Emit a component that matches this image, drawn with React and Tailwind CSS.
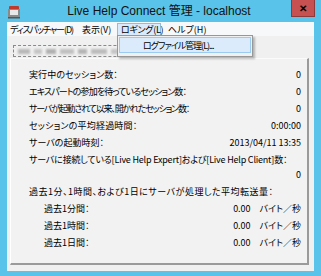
import React from 'react';

const jp = "font-['Noto_Sans_CJK_JP','Noto_Sans',sans-serif] [font-feature-settings:'palt']";

const stats = [
  { label: '実行中のセッション数：', value: '0', track: 'tracking-[0.1px]' },
  { label: 'エキスパートの参加を待っているセッション数：', value: '0', track: 'tracking-[-0.9px]' },
  { label: 'サーバが起動されて以来、開かれたセッション数：', value: '0', track: 'tracking-[-1.2px]' },
  { label: 'セッションの平均経過時間：', value: '0:00:00', track: 'tracking-[0.2px]' },
  { label: 'サーバの起動時刻：', value: '2013/04/11 13:35', track: 'tracking-normal' },
];

const rates = ['過去1分間：', '過去1時間：', '過去1日間：'];

const AppIcon = () => (
  <svg width="14" height="14" viewBox="0 0 14 14">
    <rect x="2" y="1" width="10" height="4" rx="1" fill="#c0392b" />
    <rect x="1" y="4" width="12" height="8" fill="#8a8a8a" />
    <rect x="3" y="5" width="8" height="5" fill="#e8e8e8" />
    <rect x="1" y="12" width="12" height="1.5" fill="#555" />
  </svg>
);

export default function App() {
  return (
    <div className={`w-[321px] h-[276px] bg-[#5ac3e9] flex flex-col relative overflow-hidden ${jp}`}>
      {/* Title bar */}
      <div className="h-[22px] flex items-center relative shrink-0">
        <div className="ml-[7px] mt-[1px]"><AppIcon /></div>
        <div className="flex-1 text-center text-[12px] leading-none text-[#111] font-['Liberation_Sans','Noto_Sans_CJK_JP',sans-serif] pb-[1px] ml-[6px]">
          Live Help Connect 管理 - localhost
        </div>
        <div className="w-[24px] h-[17px] mr-[6px] self-start bg-[#c75050] border border-[#8f3a3a] border-t-0 flex items-center justify-center text-[10px] font-bold text-black leading-none">
          ✕
        </div>
      </div>

      {/* Client area */}
      <div className="mx-[7px] mb-[5px] flex-1 bg-[#f0f0f0] flex flex-col relative">
        {/* Menu bar */}
        <div className="h-[14px] bg-[#f7f8f9] flex items-center text-[9px] leading-none text-black shrink-0 whitespace-nowrap">
          <span className="ml-[3px] w-[72px] tracking-[-1.1px]">ディスパッチャー(D)</span>
          <span className="w-[35px]">表示(V)</span>
          <span className="w-[44px] h-[13px] pl-[3px] flex items-center bg-[#d8eafc] border border-[#8cbde9] tracking-[-0.3px]">ロギング(L)</span>
          <span className="ml-[7px]">ヘルプ(H)</span>
        </div>

        {/* Blurred status box */}
        <div className="mt-[9px] ml-[6px] w-[239px] h-[12px] border border-dashed border-[#8a8a8a] flex items-center gap-[4px] px-[4px] shrink-0">
          <div className="w-[12px] h-[5px] bg-[#b8b8b8] blur-[1px]" />
          <div className="w-[8px] h-[5px] bg-[#c4c4c4] blur-[1px]" />
          <div className="w-[10px] h-[5px] bg-[#b0b0b0] blur-[1px]" />
          <div className="w-[14px] h-[5px] bg-[#c0c0c0] blur-[1px]" />
          <div className="w-[9px] h-[5px] bg-[#b4b4b4] blur-[1px]" />
          <div className="w-[16px] h-[5px] bg-[#bcbcbc] blur-[1px]" />
          <div className="w-[10px] h-[5px] bg-[#c4c4c4] blur-[1px]" />
        </div>

        {/* Panel */}
        <div className="mt-[1px] ml-[3px] mr-[5px] mb-[6px] flex-1 border-t border-l border-t-[#fbfbfb] border-l-[#ffffff] border-r-2 border-b-2 border-r-[#9a9a9a] border-b-[#9a9a9a] bg-[#f2f2f2] pt-[7px] pl-[18px] pr-[6px] text-[9px] text-black leading-none whitespace-nowrap">
          {stats.map((s) => (
            <div key={s.label} className="h-[17px] flex items-center justify-between">
              <span className={s.track}>{s.label}</span>
              <span>{s.value}</span>
            </div>
          ))}
          <div className="h-[16px] flex items-center">
            <span className="tracking-[-0.2px]">サーバに接続している[Live Help Expert]および[Live Help Client]数：</span>
          </div>
          <div className="h-[15px] flex items-center justify-end">0</div>
          <div className="h-[17px] mt-[1px] flex items-center tracking-[0.5px]">過去1分、1時間、および1日にサーバが処理した平均転送量：</div>
          {rates.map((r) => (
            <div key={r} className="h-[17px] flex items-center pl-[15px]">
              <span className="flex-1">{r}</span>
              <span>0.00</span>
              <span className="ml-[9px]">バイト／秒</span>
            </div>
          ))}
        </div>

        {/* Dropdown menu */}
        <div className="absolute left-[110px] top-[13px] w-[136px] h-[22px] bg-[#f0f0f0] border border-[#979797] shadow-[2px_2px_2px_rgba(0,0,0,0.25)] p-[1px]">
          <div className="h-[16px] bg-[#dcebfb] border border-[#9ccbf2] flex items-center text-[9px] leading-none text-black pl-[23px] whitespace-nowrap tracking-[-1px]">
            ログファイル管理(L)...
          </div>
        </div>
      </div>
    </div>
  );
}
